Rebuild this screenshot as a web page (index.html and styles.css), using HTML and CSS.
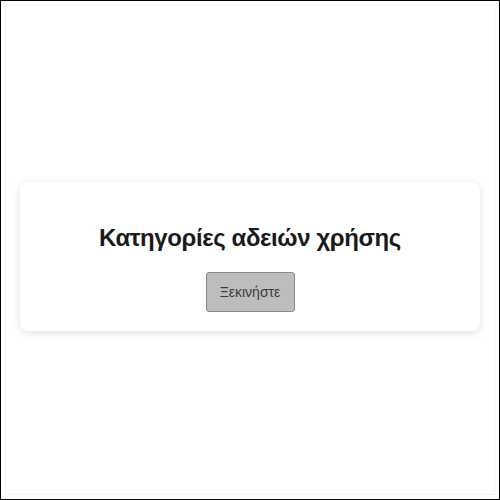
FILE: index.html
```html
<!DOCTYPE html>
<html lang="el">
<head>
<meta charset="utf-8">
<link rel="stylesheet" href="styles.css">
</head>
<body>
<div class="frame">
  <div class="inner">
    <section class="card">
      <h1 class="title">Κατηγορίες αδειών χρήσης</h1>
      <button class="start">Ξεκινήστε</button>
    </section>
  </div>
</div>
</body>
</html>
```
FILE: styles.css
```css
html, body {
  margin: 0;
  padding: 0;
  background: #ffffff;
}
.frame {
  box-sizing: border-box;
  width: 500px;
  height: 500px;
  border: 1px solid #000000;
  padding: 4px;
}
.inner {
  box-sizing: border-box;
  height: 100%;
  border: 1px solid #f4f4f4;
  padding: 0 14px;
  display: flex;
  flex-direction: column;
  justify-content: center;
}
.card {
  margin-top: 13px;
  background: #ffffff;
  border-radius: 8px;
  box-shadow: 0 2px 8px rgba(0, 0, 0, 0.12);
  padding: 41px 20px 19px;
  display: flex;
  flex-direction: column;
  align-items: center;
  gap: 19px;
}
.title {
  margin: 0;
  font-family: "Liberation Sans", Arial, sans-serif;
  font-weight: bold;
  font-size: 24px;
  letter-spacing: -0.4px;
  line-height: 30px;
  color: #1a1a1a;
}
.start {
  width: 89px;
  height: 40px;
  background: #bdbdbd;
  border: 1px solid #8a8a8a;
  border-radius: 3px;
  font-family: "Liberation Sans", Arial, sans-serif;
  font-size: 14px;
  color: #3a3a3a;
  padding: 0;
}
```
